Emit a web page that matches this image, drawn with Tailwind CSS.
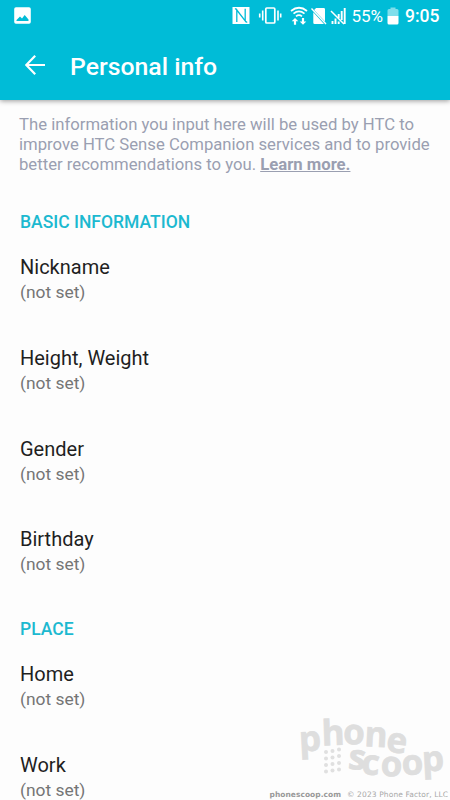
<!DOCTYPE html>
<html lang="en">
<head>
<meta charset="utf-8">
<title>Personal info</title>
<script src="https://cdn.jsdelivr.net/npm/@tailwindcss/browser@4"></script>
</head>
<body class="bg-[#fdfdfd] font-['Roboto',sans-serif]">
<div class="relative flex h-[800px] w-[450px] flex-col overflow-hidden bg-[#fdfdfd]">
  <header class="h-[100px] shrink-0 bg-[#00bcd7] text-white shadow-[0_1px_5px_rgba(0,0,0,0.4)]">
    <div class="flex h-8 items-center justify-between pl-[14px] pr-[10px]">
      <svg class="mt-[-2px] h-[17px] w-[17px]" viewBox="0 0 17 17"><path fill="#fff" fill-rule="evenodd" d="M2 .2h13a1.8 1.8 0 0 1 1.8 1.8v13a1.8 1.8 0 0 1-1.8 1.8H2A1.8 1.8 0 0 1 .2 15V2A1.8 1.8 0 0 1 2 .2ZM2.5 14h12V12.500l-3.800-4.500-2.700 3.500-2-2-3.500 3.500Z"/></svg>
      <div class="flex h-8 items-center">
        <svg class="h-8 w-[118px]" viewBox="231.500 0 118 32" fill="none" stroke="#fff">
          <path fill="#fff" stroke="none" d="M232 7h17v17h-17Z"/>
          <path stroke="#00bcd7" stroke-width="1.300" d="M236.300 22V10l8.400 10.800V8.800"/>
          <path stroke="#00bcd7" stroke-width="1.100" d="M234.500 8.500 236.500 10M244.700 21l2 1.500"/>
          <rect x="265.300" y="8" width="9" height="15" rx="1" stroke-width="1.700"/>
          <path stroke-width="1.600" d="M262.200 10.500v10M277.500 10.500v10M259.200 13.500v4M280.200 13.500v4"/>
          <path stroke-width="1.700" d="M290.500 11q8-6.500 16 0M293 13.700q5.500-4.500 11 0M295.500 16.400q3-2.400 6 0"/>
          <path fill="#fff" stroke="none" d="m294.500 18 3.300 3.300h-2.200v3.400h-2.200v-3.400h-2.200ZM301.400 18h2.200v3.400h2.200l-3.300 3.300-3.300-3.300h2.200Z"/>
          <path fill="#fff" stroke="none" d="M312.800 12.300 323.500 24h-9.400a1.300 1.300 0 0 1-1.300-1.300ZM313.600 10l2-2h7.600a1.300 1.300 0 0 1 1.300 1.300v12.200Z"/>
          <path stroke-width="1.400" d="m311 8.500 14.500 15.500"/>
          <path stroke-width="1.900" d="M332 24v-3M335 24v-5.500M338.200 24v-2.500M338.200 18v-4M341.200 20v-9M344.200 24V8"/>
          <path stroke-width="1.500" d="m330.500 11 13 13"/>
        </svg>
        <span class="ml-[2px] w-[35.500px] whitespace-nowrap text-[17px] leading-8">55%</span>
        <svg class="h-8 w-[12px]" viewBox="0 0 12 32"><path fill="#7fdeeb" d="M.5 10.500Q.5 9 2 9h1.500V7.500h5V9H10q1.500 0 1.500 1.500V16H.5Z"/><path fill="#fff" d="M.5 16h11v7q0 1.500-1.500 1.500H2Q.5 24.500.5 23Z"/></svg>
        <span class="ml-[6px] w-[35px] whitespace-nowrap text-[17.500px] font-medium leading-8">9:05</span>
      </div>
    </div>
    <div class="flex h-[68px] items-center pl-[25px]">
      <svg class="mb-[2px] h-5 w-5" viewBox="0 0 20 20" fill="none" stroke="#fff" stroke-width="2.200"><path d="M20 10H2M10.200.8 1.300 10l8.900 9.200"/></svg>
      <h1 class="ml-[25px] mt-px whitespace-nowrap text-[24.800px] font-medium leading-8">Personal info</h1>
    </div>
  </header>
  <main class="pl-5">
    <p class="-ml-px mt-[15.400px] whitespace-nowrap text-[16.700px] leading-[19.6px] text-[#9a9fb1]">The information you input here will be used by HTC to<br>improve HTC Sense Companion services and to provide<br>better recommendations to you. <a class="font-bold underline">Learn more.</a></p>
    <h2 class="mt-[37.600px] text-[17.500px] font-medium leading-5 text-[#1cb9d0]">BASIC INFORMATION</h2>
    <ul class="mt-[20.600px]">
      <li class="h-[90.700px]"><div class="text-[20px] leading-[30px] text-[#1f1f1f]">Nickname</div><div class="text-[17.400px] leading-5 text-[#757575]">(not set)</div></li>
      <li class="h-[90.700px]"><div class="text-[20px] leading-[30px] text-[#1f1f1f]">Height, Weight</div><div class="text-[17.400px] leading-5 text-[#757575]">(not set)</div></li>
      <li class="h-[90.700px]"><div class="text-[20px] leading-[30px] text-[#1f1f1f]">Gender</div><div class="text-[17.400px] leading-5 text-[#757575]">(not set)</div></li>
      <li class="h-[90.700px]"><div class="text-[20px] leading-[30px] text-[#1f1f1f]">Birthday</div><div class="text-[17.400px] leading-5 text-[#757575]">(not set)</div></li>
    </ul>
    <h2 class="mt-[3.400px] text-[17.500px] font-medium leading-5 text-[#1cb9d0]">PLACE</h2>
    <ul class="mt-[20.600px]">
      <li class="h-[90.700px]"><div class="text-[20px] leading-[30px] text-[#1f1f1f]">Home</div><div class="text-[17.400px] leading-5 text-[#757575]">(not set)</div></li>
      <li class="h-[90.700px]"><div class="text-[20px] leading-[30px] text-[#1f1f1f]">Work</div><div class="text-[17.400px] leading-5 text-[#757575]">(not set)</div></li>
    </ul>
  </main>
  <svg class="absolute bottom-0 right-0 h-[100px] w-[190px]" viewBox="260 700 190 100">
    <g fill="#dedede" stroke="#dedede" stroke-width=".7" font-family="Open Sans, sans-serif" font-weight="700" font-size="35">
      <text x="299.500 322 343 364 385.500" y="751.500 745.500 744 746 751.500" rotate="-3 -2 1 3 6">phone</text>
      <text x="347.500 361 380.500 402 422.500" y="768.500 774 776 775 771.500" rotate="6 4 1 -2 -3">scoop</text>
    </g>
    <g fill="#e0e0e0">
      <circle cx="326" cy="752" r="2"/><circle cx="332.500" cy="751" r="2"/><circle cx="339" cy="749.500" r="2"/>
      <circle cx="326" cy="758.500" r="2"/><circle cx="332.500" cy="757.500" r="2"/><circle cx="339" cy="756" r="2"/>
      <circle cx="326" cy="765" r="2"/><circle cx="332.500" cy="764" r="2"/><circle cx="339" cy="763" r="2"/>
      <circle cx="326" cy="771.500" r="2"/><circle cx="332.500" cy="770.500" r="2"/><circle cx="339" cy="769.500" r="2"/>
    </g>
    <g fill="#999" font-family="DejaVu Sans, sans-serif" font-size="7.500">
      <text x="269.500" y="797" font-weight="700" textLength="71.500">phonescoop.com</text>
      <text x="347" y="797" fill="#a8a8a8" textLength="101">© 2023 Phone Factor, LLC</text>
    </g>
  </svg>
</div>
</body>
</html>
